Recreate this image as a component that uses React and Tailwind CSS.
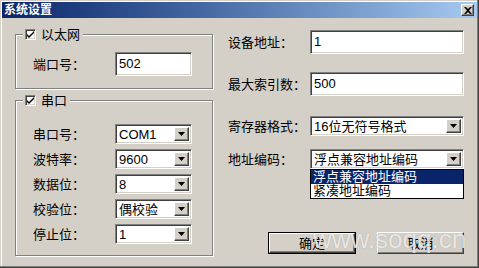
import React from 'react';

const FONT = { fontFamily: '"Liberation Sans", "Noto Sans CJK SC", sans-serif' };

const sunken = 'border border-t-[#808080] border-l-[#808080] border-b-white border-r-white shadow-[inset_1px_1px_0_#404040,inset_-1px_-1px_0_#d4d0c8] bg-white';
const raised = 'border border-t-white border-l-white border-b-[#404040] border-r-[#404040] shadow-[inset_-1px_-1px_0_#808080] bg-[#d4d0c8]';

function TextBox({ value, className }) {
    return (
        <div className={`${sunken} ${className} flex items-center pl-[3px] text-[13px] text-black`}>
            {value}
        </div>
    );
}

function ArrowButton() {
    return (
        <div className={`${raised} w-[15px] h-full flex items-center justify-center`}>
            <svg width="7" height="4" viewBox="0 0 7 4">
                <path d="M0 0h7L3.5 4z" fill="#000" />
            </svg>
        </div>
    );
}

function ComboBox({ value, className, children }) {
    return (
        <div className={`relative ${className}`}>
            <div className={`${sunken} h-full flex items-stretch p-[2px]`}>
                <div className="flex-1 flex items-center pl-[1px] text-[13px] text-black leading-none">{value}</div>
                <ArrowButton />
            </div>
            {children}
        </div>
    );
}

function CheckBox() {
    return (
        <div className={`${sunken} w-[11px] h-[11px] flex items-center justify-center`}>
            <svg width="7" height="7" viewBox="0 0 7 7">
                <path d="M0 3l2 2 5-5v2l-5 5-2-2z" fill="#000" />
            </svg>
        </div>
    );
}

function GroupBox({ title, className, children }) {
    return (
        <div className={`relative border border-[#808080] shadow-[inset_1px_1px_0_#fff,1px_1px_0_#fff] ${className}`}>
            <div className="absolute -top-[8px] left-[7px] bg-[#d4d0c8] pl-[2px] pr-[3px] flex items-center gap-[5px] text-[13px] leading-[15px]">
                <CheckBox />
                <span>{title}</span>
            </div>
            {children}
        </div>
    );
}

function LeftRow({ label, children }) {
    return (
        <div className="flex items-center pl-[17px]">
            <span className="w-[82px] text-[13px] leading-none">{label}</span>
            {children}
        </div>
    );
}

function RightRow({ label, children }) {
    return (
        <div className="flex items-center">
            <span className="w-[82px] text-[13px] leading-none">{label}</span>
            {children}
        </div>
    );
}

export default function App() {
    const serial = [
        ['串口号：', 'COM1'],
        ['波特率：', '9600'],
        ['数据位：', '8'],
        ['校验位：', '偶校验'],
        ['停止位：', '1'],
    ];

    return (
        <div style={FONT} className="relative w-[479px] h-[268px] bg-[#d4d0c8] p-[2px] shadow-[inset_-1px_-1px_0_#404040,inset_-2px_-2px_0_#808080,inset_1px_1px_0_#d4d0c8,inset_2px_2px_0_#fff] text-black overflow-hidden">
            {/* Title bar */}
            <div className="h-[16px] flex items-center justify-between bg-gradient-to-r from-[#0a246a] to-[#a6caf0] pl-[2px] pr-[3px]">
                <span className="text-white font-bold text-[12px] leading-none">系统设置</span>
                <div className={`${raised} w-[13px] h-[12px] flex items-center justify-center`}>
                    <svg width="8" height="7" viewBox="0 0 8 7">
                        <path d="M0 0h2l2 2 2-2h2L5 3.5 8 7H6L4 5 2 7H0l3-3.5z" fill="#000" />
                    </svg>
                </div>
            </div>

            {/* Body */}
            <div className="flex pl-[13px]">
                <div className="w-[198px] mt-[16px] flex flex-col gap-[11px]">
                    <GroupBox title="以太网" className="h-[55px] pt-[17px]">
                        <LeftRow label="端口号：">
                            <TextBox value="502" className="w-[77px] h-[24px]" />
                        </LeftRow>
                    </GroupBox>
                    <GroupBox title="串口" className="h-[156px] pt-[23px] flex flex-col gap-[5px]">
                        {serial.map(([label, value]) => (
                            <LeftRow key={label} label={label}>
                                <ComboBox value={value} className="w-[77px] h-[20px]" />
                            </LeftRow>
                        ))}
                    </GroupBox>
                </div>

                <div className="ml-[15px] w-[236px] mt-[12px] flex flex-col">
                    <RightRow label="设备地址：">
                        <TextBox value="1" className="w-[154px] h-[24px]" />
                    </RightRow>
                    <div className="mt-[18px]">
                        <RightRow label="最大索引数：">
                            <TextBox value="500" className="w-[154px] h-[24px]" />
                        </RightRow>
                    </div>
                    <div className="mt-[20px]">
                        <RightRow label="寄存器格式：">
                            <ComboBox value="16位无符号格式" className="w-[154px] h-[20px]" />
                        </RightRow>
                    </div>
                    <div className="mt-[13px] relative z-10">
                        <RightRow label="地址编码：">
                            <ComboBox value="浮点兼容地址编码" className="w-[154px] h-[20px]">
                                <div className="absolute top-full left-0 w-full border border-black bg-white text-[13px] leading-[13px]">
                                    <div className="h-[14px] bg-[#0a246a] text-white pl-[2px]">浮点兼容地址编码</div>
                                    <div className="h-[14px] pl-[2px]">紧凑地址编码</div>
                                </div>
                            </ComboBox>
                        </RightRow>
                    </div>
                    <div className="mt-[63px] flex justify-end gap-[21px]">
                        <div className="border border-black">
                            <div className={`${raised} w-[86px] h-[20px] flex items-center justify-center text-[13px] leading-none`}>确定</div>
                        </div>
                        <div className={`${raised} w-[87px] h-[22px] flex items-center justify-center text-[13px] leading-none`}>取消</div>
                    </div>
                </div>
            </div>

            {/* Watermark */}
            <div className="absolute left-[313px] top-[226px] text-[26px] leading-none text-white/75 pointer-events-none [text-shadow:0_0_1px_rgba(120,120,120,0.6)]">
                www.soqq.cn
            </div>
        </div>
    );
}
